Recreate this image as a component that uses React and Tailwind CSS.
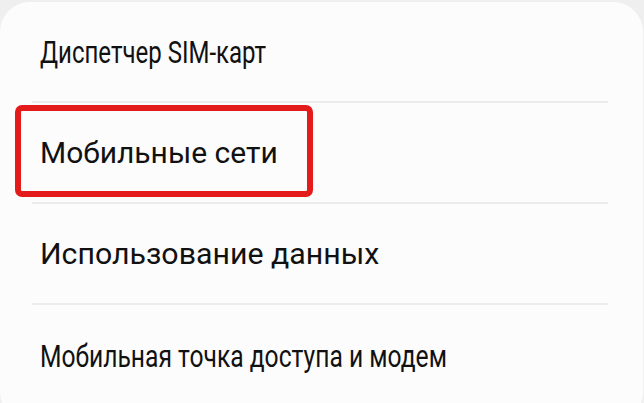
import React from 'react'

const items = [
  { label: 'Диспетчер SIM-карт', cls: 'text-[32px] scale-x-[0.75]' },
  { label: 'Мобильные сети', cls: 'text-[30px] scale-x-100', marked: true },
  { label: 'Использование данных', cls: 'text-[30px] scale-x-[1.01]' },
  { label: 'Мобильная точка доступа и модем', cls: 'text-[32px] scale-x-[0.77]' },
]

export default function App() {
  return (
    <div className="w-[644px] h-[403px] bg-[#efefef] overflow-hidden pt-[2px] font-['Roboto',sans-serif]">
      <div className="w-[643px] h-[420px] bg-[#fcfcfc] rounded-[30px] px-[32px]">
        {items.map((item, i) => (
          <div
            key={item.label}
            className={`relative h-[101px] flex items-center ${i < items.length - 1 ? 'border-b-2 border-[#ebebeb]' : ''} w-[576px]`}
          >
            <span className={`ml-[8px] text-[#111] origin-left inline-block whitespace-nowrap ${item.cls}`}>{item.label}</span>
            {item.marked && (
              <div className="absolute left-[-17px] top-[2px] w-[298px] h-[92px] border-[6px] border-[#e41b1b] rounded-[7px]" />
            )}
          </div>
        ))}
      </div>
    </div>
  )
}
